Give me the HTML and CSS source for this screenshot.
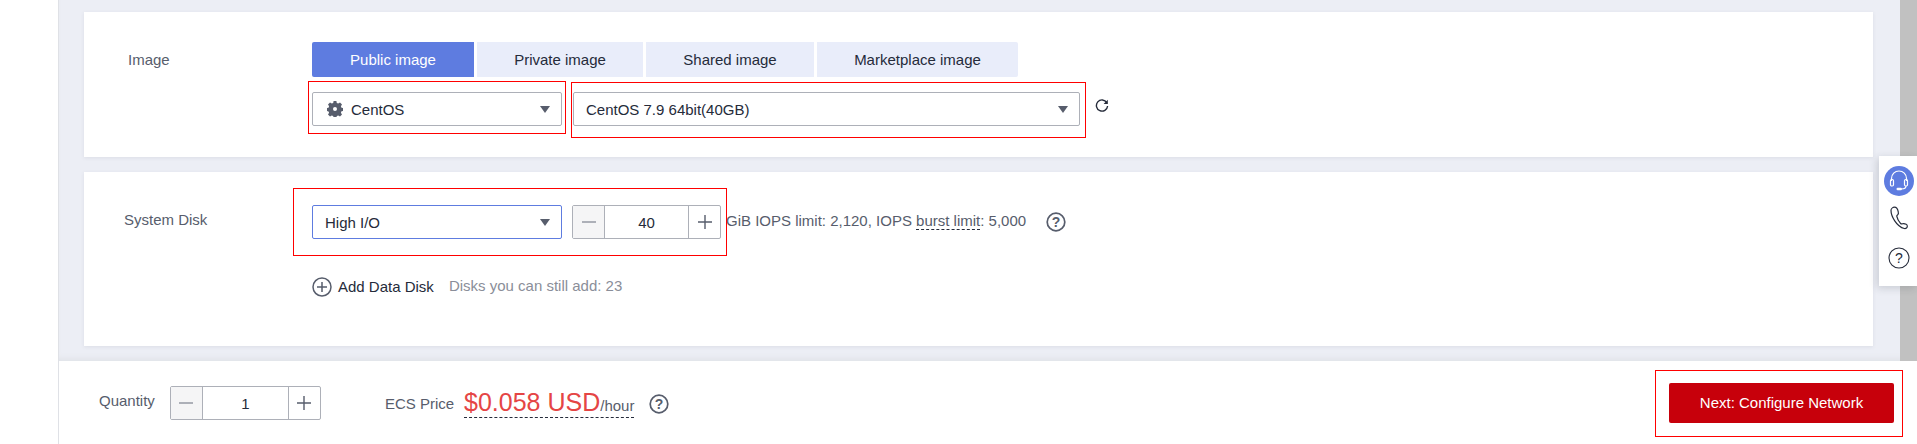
FILE: index.html
```html
<!DOCTYPE html>
<html lang="en">
<head>
<meta charset="utf-8">
<title>Configure ECS</title>
<link rel="stylesheet" href="styles.css">
</head>
<body>
<div class="page">
  <div class="side"></div>
  <div class="main">
    <div class="top">
      <div class="content">
        <section class="card card-image">
          <div class="label label-image">Image</div>
          <div class="body">
            <div class="tabs">
              <button class="tab tab-public active">Public image</button>
              <button class="tab tab-private">Private image</button>
              <button class="tab tab-shared">Shared image</button>
              <button class="tab tab-market">Marketplace image</button>
            </div>
            <div class="row row-os">
              <div class="select select-short">
                <svg class="gear" viewBox="0 0 16 16"><path fill="#575d6c" fill-rule="evenodd" d="M6.6 0h2.8l.4 2 1.4.6L13 1.500 15 3.500l-1.100 1.800.6 1.400 2 .4v2.800l-2 .4-.6 1.400L15 13.600 13 15.500l-1.800-1.100-1.400.6-.4 2H6.600l-.4-2-1.400-.6L3 15.500 1 13.600l1.100-1.800-.6-1.400-2-.4V7.100l2-.4.6-1.400L1 3.500 3 1.500l1.800 1.100 1.400-.6zM8 6a2 2 0 1 0 0 4 2 2 0 0 0 0-4z"/></svg>
                <span>CentOS</span><i class="caret"></i>
              </div>
              <div class="select select-long"><span>CentOS 7.9 64bit(40GB)</span><i class="caret"></i></div>
              <svg class="refresh" viewBox="0 0 14 14"><path fill="none" stroke="#252b3a" stroke-width="1.400" d="M11.800 3.600A5.600 5.600 0 1 0 12.600 7"/><path fill="#252b3a" d="M12.800 .8v4.200H8.600z"/></svg>
            </div>
          </div>
        </section>
        <section class="card card-disk">
          <div class="label label-disk">System Disk</div>
          <div class="body">
            <div class="row row-disk">
              <div class="select select-short select-active"><span>High I/O</span><i class="caret"></i></div>
              <div class="stepper stepper-disk">
                <span class="step step-off"><svg viewBox="0 0 16 16"><path d="M1 8h14" stroke="#adb0b8" stroke-width="2"/></svg></span>
                <span class="value">40</span>
                <span class="step step-on"><svg viewBox="0 0 16 16"><path d="M1 8h14M8 1v14" stroke="#575d6c" stroke-width="1.400"/></svg></span>
              </div>
              <div class="iops">GiB IOPS limit: 2,120, IOPS <span class="dashed">burst limit</span>: 5,000</div>
              <svg class="help help-iops" viewBox="0 0 20 20"><circle cx="10" cy="10" r="8.800" fill="none" stroke="#575d6c" stroke-width="1.700"/><text x="10" y="14.500" text-anchor="middle" class="help-mark">?</text></svg>
            </div>
            <div class="row row-add">
              <svg class="add-icon" viewBox="0 0 20 20"><circle cx="10" cy="10" r="9" fill="none" stroke="#575d6c" stroke-width="1.500"/><path d="M10 5v10M5 10h10" stroke="#575d6c" stroke-width="1.500"/></svg>
              <span class="add-text">Add Data Disk</span>
              <span class="add-note">Disks you can still add: 23</span>
            </div>
          </div>
        </section>
      </div>
      <div class="scrollbar"></div>
    </div>
    <footer class="footer">
      <span class="qty-label">Quantity</span>
      <div class="stepper stepper-qty">
        <span class="step step-off"><svg viewBox="0 0 16 16"><path d="M1 8h14" stroke="#adb0b8" stroke-width="2"/></svg></span>
        <span class="value">1</span>
        <span class="step step-on"><svg viewBox="0 0 16 16"><path d="M1 8h14M8 1v14" stroke="#575d6c" stroke-width="1.400"/></svg></span>
      </div>
      <div class="price-wrap">
        <span class="price-label">ECS Price</span>
        <span class="price"><span class="amount">$0.058 USD</span><span class="unit">/hour</span></span>
        <svg class="help help-price" viewBox="0 0 20 20"><circle cx="10" cy="10" r="8.800" fill="none" stroke="#575d6c" stroke-width="1.700"/><text x="10" y="14.500" text-anchor="middle" class="help-mark">?</text></svg>
      </div>
      <button class="next">Next: Configure Network</button>
    </footer>
  </div>
</div>

<aside class="float">
  <span class="float-round">
    <svg viewBox="0 0 30 30"><path fill="none" stroke="#fff" stroke-width="1.200" d="M7.500 15v-2.500a7.500 7.500 0 0 1 15 0V15"/><rect x="6.500" y="13.500" width="3" height="6.500" rx="1.200" fill="none" stroke="#fff" stroke-width="1.200"/><rect x="20.500" y="13.500" width="3" height="6.500" rx="1.200" fill="none" stroke="#fff" stroke-width="1.200"/><path fill="none" stroke="#fff" stroke-width="1.200" d="M22 20c0 2-2 3-4.500 3"/><rect x="12.500" y="21.800" width="5.500" height="2.400" rx="1.200" fill="#fff"/></svg>
  </span>
  <svg class="float-icon phone" viewBox="0 0 20 24"><path fill="none" stroke="#252b3a" stroke-width="1.200" d="M5.500 1.200c-1.500 0-3.500 1.300-3.500 3.300 0 5.500 5.500 16 13.300 18 1.800.3 3-.8 3-2.300 0-1-.3-1.700-1.100-2-1.500-.6-2.800-.7-3.700-.4-.8.300-1.400.3-2-.5-1.700-2-3.200-4.600-3.700-7-.2-.9.300-1.200 1-1.700.8-.6.800-1.500.4-3-.5-2.500-1.100-4.400-3.700-4.400z"/></svg>
  <svg class="float-icon ask" viewBox="0 0 22 22"><circle cx="11" cy="11" r="10" fill="none" stroke="#252b3a" stroke-width="1.100"/><text x="11" y="16" text-anchor="middle" class="ask-mark">?</text></svg>
</aside>

<div class="mark mark-os"></div>
<div class="mark mark-image"></div>
<div class="mark mark-disk"></div>
<div class="mark mark-next"></div>
</body>
</html>
```
FILE: styles.css
```css
* { box-sizing: border-box; }
html, body { margin: 0; height: 444px; overflow: hidden; background: #fff; }
body { font-family: "Liberation Sans", Arial, sans-serif; font-size: 15px; color: #252b3a; position: relative; }
button { font: inherit; border: 0; padding: 0; }
svg { display: block; flex: none; }

.page { display: flex; height: 444px; }
.side { width: 58px; flex: none; background: #fff; }
.main { flex: 1; min-width: 0; display: flex; flex-direction: column; border-left: 1px solid #dfe1e6; }
.top { height: 361px; flex: none; display: flex; background: #eceef5; box-shadow: inset 0 -6px 6px -4px #dfe1e6; }
.content { flex: 1; padding: 12px 27px 0 25px; display: flex; flex-direction: column; gap: 15px; }
.scrollbar { width: 17px; flex: none; background: #c1c1c1; }

.card { background: #fff; display: flex; box-shadow: 0 1px 4px rgba(37, 43, 58, .08); }
.card-image { height: 145px; padding-top: 30px; }
.card-disk { height: 174px; padding-top: 33px; }
.label { width: 228px; flex: none; color: #575d6c; line-height: 20px; }
.label-image { padding-left: 44px; padding-top: 8px; }
.label-disk { padding-left: 40px; padding-top: 5px; }
.body { flex: 1; min-width: 0; }
.row { display: flex; align-items: center; }

.tabs { display: flex; gap: 3px; }
.tab { height: 35px; background: #e9edfa; color: #252b3a; }
.tab.active { background: #5e7ce0; color: #fff; border-radius: 2px 0 0 2px; }
.tab-public { width: 162px; }
.tab-private { width: 166px; }
.tab-shared { width: 168px; }
.tab-market { width: 201px; border-radius: 0 2px 2px 0; }

.row-os { margin-top: 15px; }
.select { height: 34px; display: flex; align-items: center; border: 1px solid #adb0b8; border-radius: 2px; padding: 0 11px 0 12px; background: #fff; }
.select-short { width: 250px; }
.select-long { width: 507px; margin-left: 11px; }
.select-active { border-color: #5e7ce0; }
.caret { margin-left: auto; width: 0; height: 0; border-left: 5px solid transparent; border-right: 5px solid transparent; border-top: 7px solid #575d6c; }
.gear { width: 16px; height: 16px; margin-right: 8px; margin-left: 2px; }
.refresh { width: 14px; height: 14px; margin-left: 15px; margin-top: -7px; }

.stepper { height: 34px; display: flex; border: 1px solid #adb0b8; border-radius: 2px; }
.stepper-disk { width: 149px; margin-left: 10px; }
.stepper-qty { width: 151px; margin-left: 15px; }
.step { width: 32px; flex: none; display: flex; align-items: center; justify-content: center; }
.step svg { width: 16px; height: 16px; }
.step-off { background: #f5f5f6; border-right: 1px solid #adb0b8; }
.step-on { border-left: 1px solid #adb0b8; }
.value { flex: 1; text-align: center; line-height: 34px; }
.iops { margin-left: 5px; color: #575d6c; margin-top: -4px; white-space: nowrap; }
.dashed { border-bottom: 1px dashed #252b3a; }
.help { width: 20px; height: 20px; }
.help-iops { margin-left: 20px; }
.help-mark { font: 700 14px "Liberation Sans", Arial, sans-serif; fill: #575d6c; }

.row-add { margin-top: 37px; }
.add-icon { width: 20px; height: 20px; margin-top: 1px; }
.add-text { margin-left: 6px; }
.add-note { margin-left: 15px; color: #8a8e99; margin-top: -3px; }

.footer { flex: 1; display: flex; align-items: center; background: #fff; padding: 0 23px 0 40px; }
.qty-label { color: #575d6c; margin-top: -5px; }
.price-wrap { display: flex; align-items: center; margin-left: 64px; margin-top: 2px; }
.price-label { color: #575d6c; }
.price { margin-left: 10px; border-bottom: 1px dashed #252b3a; line-height: 23px; padding-top: 1px; white-space: nowrap; }
.amount { font-size: 25px; color: #e54545; }
.unit { color: #575d6c; }
.help-price { margin-left: 15px; }
.next { margin-left: auto; width: 225px; height: 40px; background: #c7000b; color: #fff; border-radius: 2px; }

.float { position: absolute; left: 1879px; top: 156px; width: 38px; height: 130px; background: #fff; box-shadow: -2px 2px 8px rgba(37, 43, 58, .18); display: flex; flex-direction: column; align-items: center; padding: 10px 0 0 2px; }
.float-round { width: 30px; height: 30px; border-radius: 50%; background: #5e7ce0; flex: none; }
.float-round svg { width: 30px; height: 30px; }
.phone { width: 20px; height: 24px; margin-top: 10px; }
.ask { width: 22px; height: 22px; margin-top: 17px; }
.ask-mark { font: 400 14px "Liberation Sans", Arial, sans-serif; fill: #252b3a; }

.mark { position: absolute; border: 1px solid #f00; pointer-events: none; }
.mark-os { left: 308px; top: 81px; width: 258px; height: 53px; }
.mark-image { left: 571px; top: 82px; width: 515px; height: 56px; }
.mark-disk { left: 293px; top: 188px; width: 434px; height: 68px; }
.mark-next { left: 1655px; top: 370px; width: 248px; height: 67px; }
```
